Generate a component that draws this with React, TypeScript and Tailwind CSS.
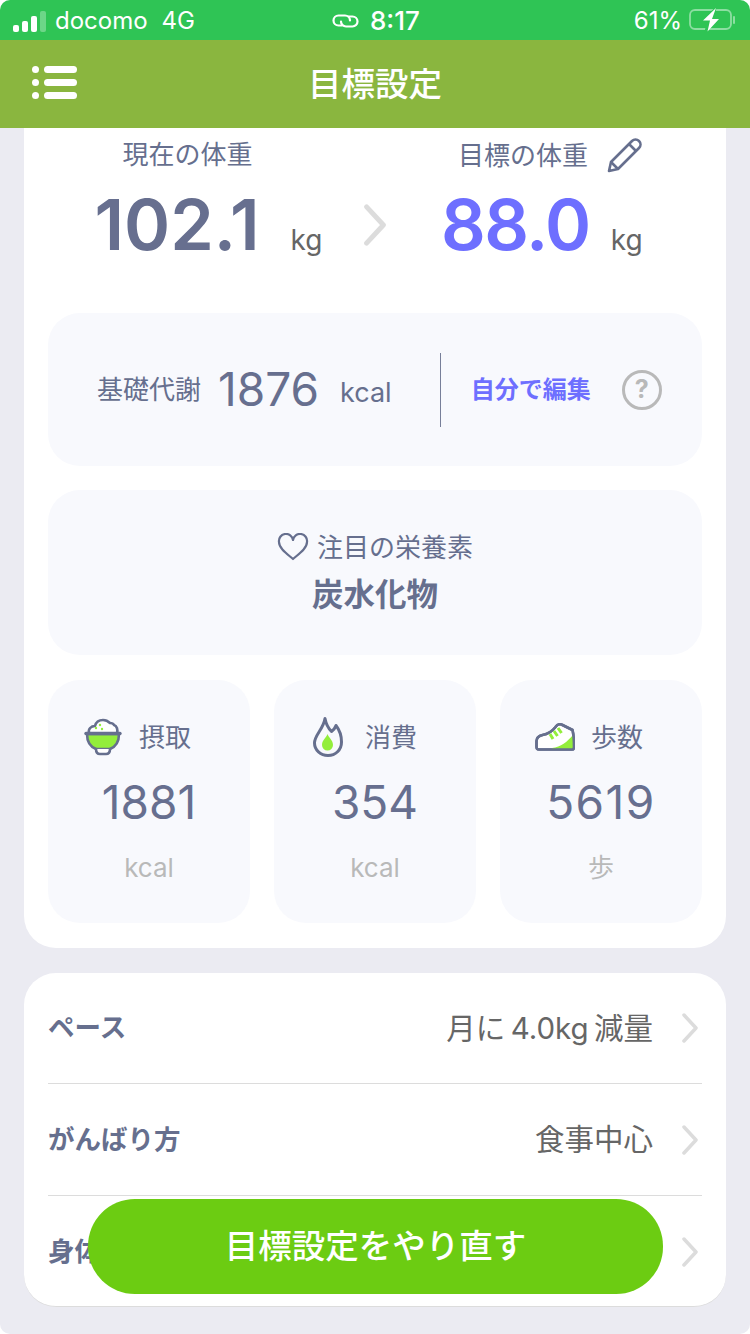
import React from "react";

const font = { fontFamily: 'Inter, "Noto Sans CJK JP", sans-serif' };

function Chevron({ className = "" }: { className?: string }) {
  return (
    <svg viewBox="0 0 18 30" className={className} fill="none" stroke="#dcdcdc" strokeWidth="3.5" strokeLinecap="round" strokeLinejoin="round">
      <path d="M3 2l12 13L3 28" />
    </svg>
  );
}

function Bowl() {
  return (
    <svg width="38" height="38" viewBox="0 0 38 38" fill="none" stroke="#666f8e" strokeWidth="2.6" strokeLinejoin="round" strokeLinecap="round">
      <path d="M5 15c-1-4 2-7 6-7 1-4 4-6 8-6 3 0 5 1 7 3 1 0 3 0 4 2 3 1 4 5 3 8" fill="#fff" />
      <path d="M3 16h32c0 8-4 13-9 15H12C7 29 3 24 3 16z" fill="#93ee3b" />
      <path d="M2 15.500h34" strokeWidth="3.4" />
      <path d="M12 31c0 3 1 5 4 5h6c3 0 4-2 4-5" fill="#fff" />
      <circle cx="12" cy="10" r="1.200" fill="#93ee3b" stroke="none" />
      <circle cx="16" cy="7" r="1.200" fill="#93ee3b" stroke="none" />
      <circle cx="18" cy="11" r="1.200" fill="#93ee3b" stroke="none" />
    </svg>
  );
}

function Flame() {
  return (
    <svg width="30" height="40" viewBox="0 0 30 40" fill="none" stroke="#666f8e" strokeWidth="3" strokeLinejoin="round">
      <path d="M12 1.500C13 7 15 11 18.500 14.500C20.500 13 22 11.500 23 8.500C26.500 13 28.500 19 28.500 25C28.500 33 22.500 38.500 15 38.500S1.500 33 1.500 26C1.500 18 10.500 12 12 1.500z" />
      <path d="M14.500 17c1.500 4 5.500 6 5.500 11a5.500 5.500 0 0 1-11 0c0-5 4-7 5.500-11z" fill="#93ee3b" stroke="none" />
    </svg>
  );
}

function Shoe() {
  return (
    <svg width="40" height="28" viewBox="0 0 40 28" fill="none" stroke="#666f8e" strokeWidth="2.6" strokeLinejoin="round">
      <path d="M1.500 18c0-3 2-5 6-6 6-1 10-4 13-8 2-3 5-3 7-2l10 5c1.500 6 1.500 12 1.500 17 0 2-1 2.500-2 2.500H4c-2 0-2.500-1-2.500-3z" fill="#fff" />
      <path d="M17 25c9-1 15-6 21-13l.5 14H17z" fill="#93ee3b" stroke="none" />
      <path d="M1.500 18c0-3 2-5 6-6 6-1 10-4 13-8 2-3 5-3 7-2l10 5c1.500 6 1.500 12 1.500 17 0 2-1 2.500-2 2.500H4c-2 0-2.500-1-2.500-3z" />
      <path d="M15 11l3 5M19 8l3.500 5M23 5l3.500 5" stroke="#93ee3b" strokeWidth="3" />
    </svg>
  );
}

function Stat({ icon, label, value, unit, rowClass, iconClass, valueClass = "" }: { icon: React.ReactNode; label: string; value: string; unit: string; rowClass: string; iconClass: string; valueClass?: string }) {
  return (
    <div className="flex-1 h-[243px] rounded-[32px] bg-[#f8f9fd] flex flex-col items-center">
      <div className={`flex items-center self-start h-[40px] mt-[37px] ${rowClass}`}>
        <div className={iconClass}>{icon}</div>
        <span className="text-[26px] text-[#666f8e]">{label}</span>
      </div>
      <div className={`text-[46px] leading-[56px] mt-[17px] text-[#676f8f] ${valueClass}`}>{value}</div>
      <div className="text-[26px] leading-[32px] mt-[22px] text-[#b9b9b9]">{unit}</div>
    </div>
  );
}

function Row({ label, value, className }: { label: string; value?: string; className: string }) {
  return (
    <div className={`flex items-center ${className}`}>
      <span className="text-[26.500px] font-bold text-[#666f8e]">{label}</span>
      <span className="ml-auto text-[29.500px] text-[#666666] [word-spacing:-3px]">{value}</span>
      <Chevron className="w-[18px] h-[30px] ml-[28px] mr-[3px]" />
    </div>
  );
}

export default function App() {
  return (
    <div style={font} className="relative w-[750px] h-[1334px] overflow-hidden rounded-[10px] bg-[#ebebf2] flex flex-col">
      <div className="h-[40px] bg-[#2fc455] text-white flex items-center pl-[13px] pr-[14px] pt-[2px] text-[24px] relative shrink-0">
        <div className="flex items-end gap-[3px] h-[21px]">
          <div className="w-[6px] h-[7px] bg-white rounded-[2px]" />
          <div className="w-[6px] h-[11px] bg-white rounded-[2px]" />
          <div className="w-[6px] h-[16px] bg-white rounded-[2px]" />
          <div className="w-[6px] h-[21px] bg-white/30 rounded-[2px]" />
        </div>
        <span className="ml-[9px]">docomo</span>
        <span className="ml-[14px]">4G</span>
        <div className="absolute left-[332px] top-[9px] flex items-center">
          <svg width="27" height="20" viewBox="0 0 27 20" fill="none" stroke="#fff" strokeWidth="2.200" strokeLinecap="round">
            <path d="M10 14.500H6.500a5 5 0 0 1 0-10H13a5 5 0 0 1 5 5" />
            <path d="M16.500 5.500h4a5 5 0 0 1 0 10H14a5 5 0 0 1-5-5" />
          </svg>
          <span className="ml-[11px] font-medium text-[26px] leading-[24px]">8:17</span>
        </div>
        <span className="ml-auto mr-[7px]">61%</span>
        <svg width="47" height="26" viewBox="0 0 47 26" fill="none" className="-mt-[3px]">
          <rect x="1" y="3" width="41" height="19" rx="5" stroke="#fff" strokeOpacity="0.45" strokeWidth="1.800" />
          <path d="M45 10v6" stroke="#fff" strokeOpacity="0.45" strokeWidth="2" strokeLinecap="round" />
          <path d="M28 -1L11 14h7l-3 13 17-16h-7l3-12z" fill="#2fc455" />
          <path d="M27 1L14 13.500h7l-2.500 11L30 12h-7z" fill="#fff" />
        </svg>
      </div>
      <div className="h-[88px] bg-[#8ab63f] flex items-center relative shrink-0">
        <div className="absolute left-[32px] top-[26px] w-[45px] flex flex-col gap-[6px]">
          {[0, 1, 2].map((i) => (
            <div key={i} className="flex items-center gap-[5px] h-[7px]">
              <div className="w-[7px] h-[7px] rounded-full bg-white" />
              <div className="w-[33px] h-[7px] rounded-full bg-white" />
            </div>
          ))}
        </div>
        <div className="w-full text-center text-[33.500px] font-medium text-white">目標設定</div>
      </div>

      <div className="mx-[24px] bg-white rounded-b-[32px] px-[24px] h-[820px] shrink-0">
        <div className="flex h-[185px]">
          <div className="w-[279px] flex flex-col items-center">
            <div className="text-[26px] leading-[36px] mt-[9px] text-[#666f8e]">現在の体重</div>
            <div className="flex items-baseline mt-[10px] ml-[42px]">
              <span className="text-[70px] leading-[84px] font-semibold text-[#676f8f]">102.1</span>
              <span className="text-[28px] text-[#666666] ml-[31px]">kg</span>
            </div>
          </div>
          <Chevron className="w-[26px] h-[42px] mt-[76px] ml-[35px]" />
          <div className="flex-1 flex flex-col">
            <div className="flex items-center mt-[9px] ml-[70px] h-[36px]">
              <span className="text-[26px] text-[#666f8e]">目標の体重</span>
              <svg width="36" height="36" viewBox="0 0 36 36" fill="none" stroke="#666f8e" strokeWidth="2.600" strokeLinejoin="round" className="ml-[19px]">
                <path d="M2 34l2-9L25 4c2-2 5-2 7 0s2 5 0 7L11 32z" />
                <path d="M22 7l7 7M4 25l7 7" />
              </svg>
            </div>
            <div className="flex items-baseline mt-[10px] ml-[53px]">
              <span className="text-[70px] leading-[84px] font-semibold text-[#6e6fff] tracking-[-1.500px]">88.0</span>
              <span className="text-[28px] text-[#666666] ml-[21px]">kg</span>
            </div>
          </div>
        </div>

        <div className="h-[153px] rounded-[32px] bg-[#f8f9fd] flex items-center pl-[49px]">
          <span className="text-[26px] text-[#666f8e]">基礎代謝</span>
          <span className="text-[46px] text-[#676f8f] ml-[17px]">1876</span>
          <span className="text-[27px] text-[#666f8e] ml-[21px] mt-[8px]">kcal</span>
          <div className="w-px h-[74px] bg-[#777f99] ml-[48px]" />
          <span className="text-[24px] font-bold text-[#6e6fff] ml-[30px]">自分で編集</span>
          <div className="w-[40px] h-[40px] rounded-full border-[3px] border-[#b9b9b9] text-[#b9b9b9] text-[25px] font-bold flex items-center justify-center ml-[31px]">?</div>
        </div>

        <div className="h-[165px] rounded-[32px] bg-[#f8f9fd] mt-[24px] flex flex-col items-center">
          <div className="flex items-center h-[36px] mt-[39px]">
            <svg width="32" height="28" viewBox="0 0 32 28" fill="none" stroke="#666f8e" strokeWidth="2.200" strokeLinejoin="round" className="mr-[8px]">
              <path d="M16 26C9 20 2 15 2 9a7 7 0 0 1 14-2 7 7 0 0 1 14 2c0 6-7 11-14 17z" />
            </svg>
            <span className="text-[26px] text-[#666f8e]">注目の栄養素</span>
          </div>
          <div className="text-[31.500px] leading-[44px] font-bold text-[#666f8e] mt-[8px]">炭水化物</div>
        </div>

        <div className="flex gap-[24px] mt-[25px]">
          <Stat icon={<Bowl />} rowClass="pl-[36px]" iconClass="mr-[17px]" label="摂取" value="1881" unit="kcal" />
          <Stat icon={<Flame />} rowClass="pl-[39px]" iconClass="mr-[22px]" label="消費" value="354" unit="kcal" />
          <Stat icon={<Shoe />} rowClass="pl-[35px]" iconClass="mr-[16px]" label="歩数" value="5619" unit="歩" valueClass="tracking-[1.500px]" />
        </div>
      </div>

      <div className="mx-[24px] mt-[25px] bg-white rounded-[32px] px-[24px] h-[334px] shrink-0 border-b border-[#dcdcdc]">
        <Row label="ペース" value="月に 4.0kg 減量" className="h-[111px] border-b border-[#dcdcdc]" />
        <Row label="がんばり方" value="食事中心" className="h-[112px] border-b border-[#dcdcdc]" />
        <Row label="身体情報" className="h-[112px]" />
      </div>

      <div className="absolute left-[88px] top-[1199px] w-[575px] h-[95px] rounded-[47px] bg-[#6ccc12] flex items-center justify-center text-[33.500px] font-medium text-white">
        目標設定をやり直す
      </div>
    </div>
  );
}
